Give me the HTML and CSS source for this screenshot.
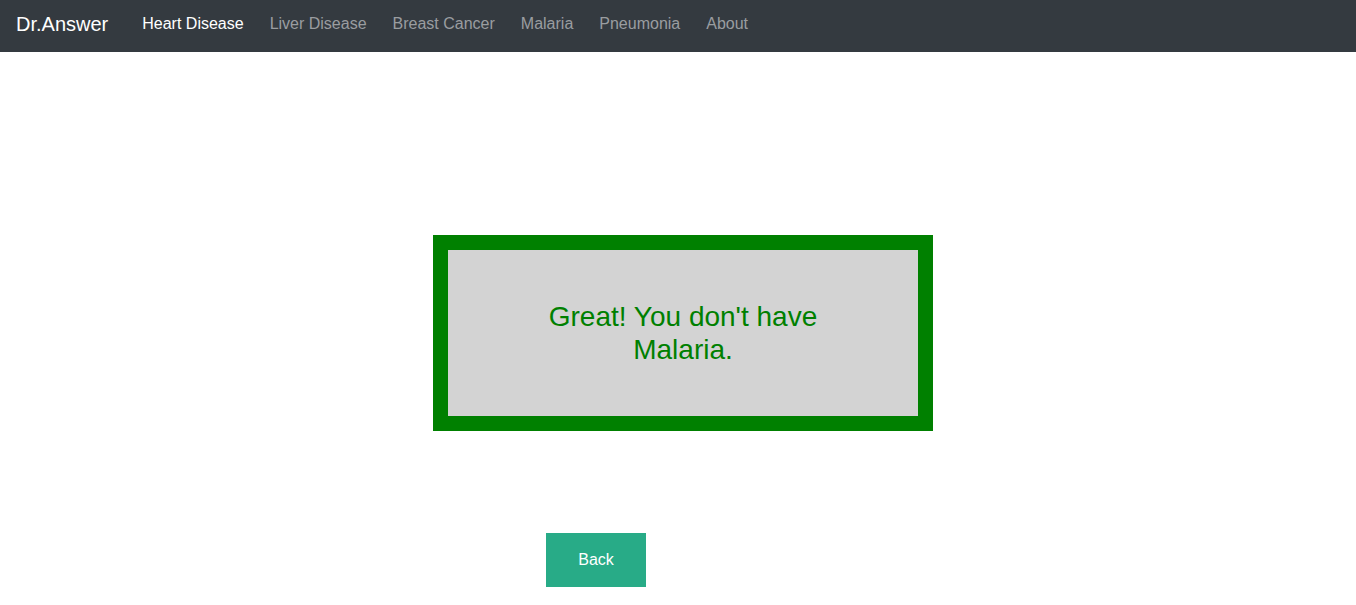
FILE: index.html
```html
<!DOCTYPE html>
<html lang="en">
<head>
<meta charset="utf-8">
<title>Dr.Answer</title>
<link rel="stylesheet" href="styles.css">
</head>
<body>
<nav class="navbar">
  <a class="brand" href="#">Dr.Answer</a>
  <ul class="nav">
    <li><a class="nav-link active" href="#">Heart Disease</a></li>
    <li><a class="nav-link" href="#">Liver Disease</a></li>
    <li><a class="nav-link" href="#">Breast Cancer</a></li>
    <li><a class="nav-link" href="#">Malaria</a></li>
    <li><a class="nav-link" href="#">Pneumonia</a></li>
    <li><a class="nav-link" href="#">About</a></li>
  </ul>
</nav>
<main class="content">
  <div class="result">
    <p class="result-text">Great! You don't have Malaria.</p>
  </div>
  <a class="back" href="#">Back</a>
</main>
</body>
</html>
```
FILE: styles.css
```css
* { box-sizing: border-box; }
html, body { margin: 0; padding: 0; }
body {
  font-family: "Liberation Sans", Arial, sans-serif;
  background: #fff;
  color: #212529;
}
.navbar {
  height: 52px;
  background: #343a40;
  display: flex;
  align-items: center;
  padding: 0 16px;
}
.brand {
  color: #fff;
  font-size: 20px;
  text-decoration: none;
  margin-right: 21px;
  line-height: 1;
  position: relative;
  top: -2px;
}
.nav {
  list-style: none;
  display: flex;
  margin: 0;
  padding: 0;
  position: relative;
  top: -2px;
}
.nav-link {
  display: block;
  padding: 0 13px;
  font-size: 16px;
  color: #9a9da0;
  text-decoration: none;
  line-height: 1;
}
.nav-link.active { color: #fff; }
.content {
  padding-top: 183px;
}
.result {
  width: 500px;
  margin-left: 433px;
  border: 15px solid #008000;
  background: #d3d3d3;
  padding: 50px 100px;
}
.result-text {
  margin: 0;
  color: #008000;
  font-size: 28px;
  line-height: 33px;
  text-align: center;
}
.back {
  display: flex;
  align-items: center;
  justify-content: center;
  width: 100px;
  height: 54px;
  margin: 102px 0 0 546px;
  background: #28ab87;
  color: #fff;
  font-size: 16px;
  text-decoration: none;
}
```
